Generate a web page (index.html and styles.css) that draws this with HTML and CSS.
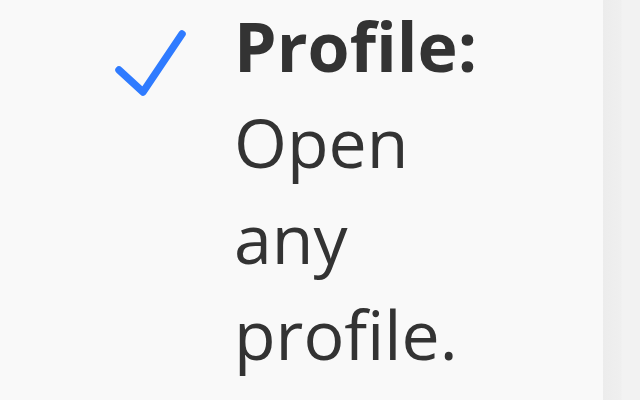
FILE: index.html
```html
<!DOCTYPE html>
<html lang="en">
<head>
    <meta charset="UTF-8">
    <meta name="viewport" content="width=device-width, initial-scale=1.0">
    <title>Profile</title>
    <link rel="stylesheet" href="styles.css">
</head>
<body>
    <div class="page">
        <div class="item">
            <div class="check">
                <svg width="72" height="70" viewBox="0 0 72 70">
                    <path d="M5 42 L29 64 L68 6" fill="none" stroke="#2f7bff" stroke-width="7.5" stroke-linecap="round" stroke-linejoin="round"/>
                </svg>
            </div>
            <p class="text"><strong>Profile:</strong> Open any profile.</p>
        </div>
        <div class="scroll-track"></div>
    </div>
</body>
</html>
```

FILE: styles.css
```css
* {
    margin: 0;
    padding: 0;
    box-sizing: border-box;
}

body {
    font-family: 'Open Sans', 'Noto Sans', sans-serif;
    background: #f9f9f9;
    color: #333;
    height: 100vh;
    overflow: hidden;
}

.page {
    display: flex;
    height: 100vh;
}

.item {
    flex: 1;
    display: flex;
    padding-left: 114px;
    gap: 48px;
}

.check {
    width: 72px;
    padding-top: 28px;
}

.text {
    width: 255px;
    margin-top: -2px;
    font-size: 68px;
    line-height: 96px;
}

.text strong {
    font-weight: 700;
}

.scroll-track {
    width: 37px;
    background: linear-gradient(to right, #ececec 0, #efefef 18px, #f2f2f2 19px, #f2f2f2 100%);
}
```
